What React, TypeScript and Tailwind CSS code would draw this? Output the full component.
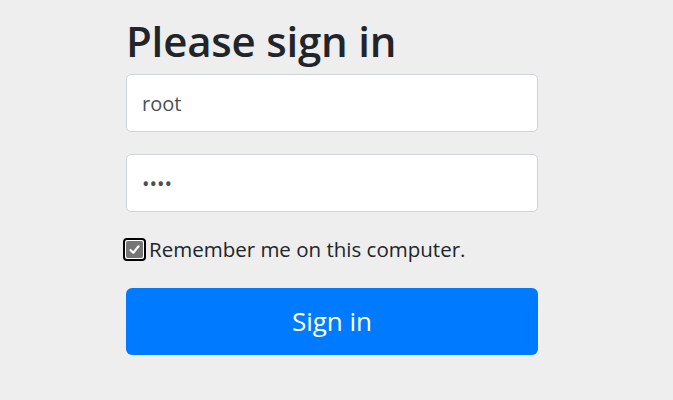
export default function App() {
  return (
    <div
      className="min-h-[400px] w-full bg-[#eeeeee] text-[#212529]"
      style={{ fontFamily: '"Open Sans", "Noto Sans", sans-serif' }}
    >
      <form className="ml-[126px] flex w-[412px] flex-col pt-[16px]">
        <h1 className="mb-[8px] text-[42px] font-semibold leading-[1.2] tracking-[-0.2px]">Please sign in</h1>

        <input
          type="text"
          defaultValue="root"
          className="h-[58px] w-full rounded-[5px] border border-[#ced4da] bg-white px-[15px] text-[20px] text-[#495057] outline-none"
        />
        <input
          type="password"
          defaultValue="root"
          className="mt-[22px] h-[58px] w-full rounded-[5px] border border-[#ced4da] bg-white px-[15px] text-[20px] text-[#495057] outline-none"
        />

        <label className="ml-[-3px] mt-[24px] flex items-center gap-[3px] text-[20.5px] leading-[1.3] text-[#212529]">
          <span className="flex h-[23px] w-[23px] items-center justify-center rounded-[4px] border-2 border-black bg-white">
            <span className="flex h-[17px] w-[17px] items-center justify-center rounded-[2px] bg-[#767676]">
              <svg width="13" height="13" viewBox="0 0 16 16" fill="none">
                <path d="M3 8.5 L6.5 12 L13 4" stroke="white" strokeWidth="2.6" strokeLinecap="round" strokeLinejoin="round" />
              </svg>
            </span>
          </span>
          Remember me on this computer.
        </label>

        <button
          type="button"
          className="mt-[25px] h-[67px] w-full rounded-[6px] bg-[#007bff] text-[26px] text-white"
        >
          Sign in
        </button>
      </form>
    </div>
  );
}
